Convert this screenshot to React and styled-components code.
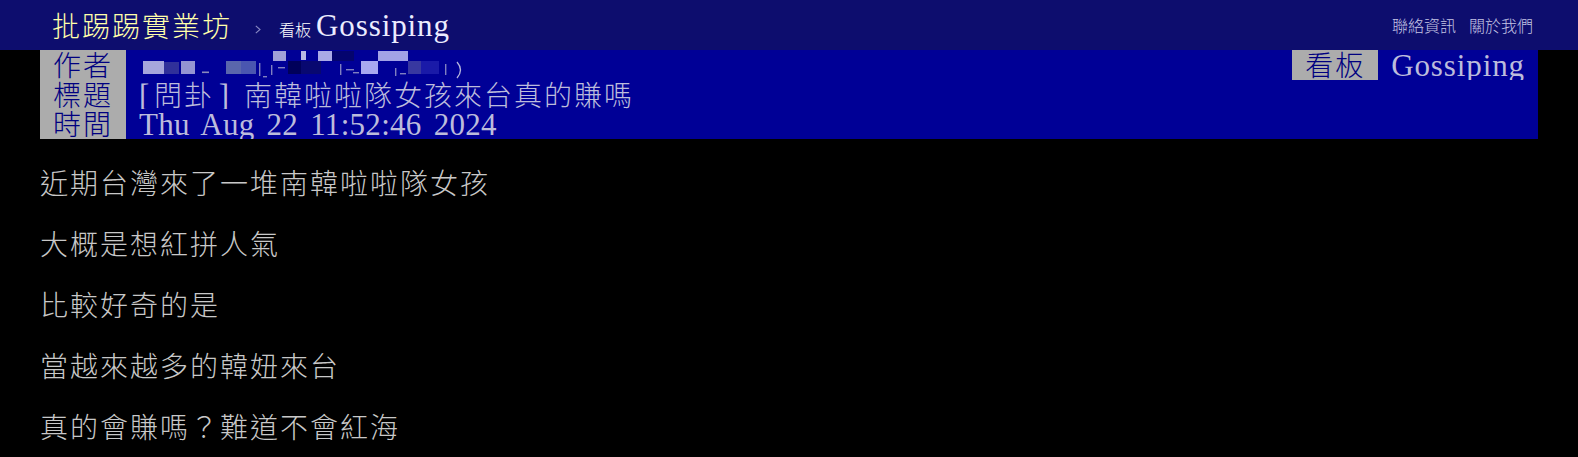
import React from "react";
import styled, { createGlobalStyle } from "styled-components";

const GlobalStyle = createGlobalStyle`
  html, body { margin: 0; padding: 0; background: #000; }
  body { font-family: "Noto Sans CJK TC", "Liberation Serif", sans-serif; font-weight: 300; }
  #root { min-height: 457px; }
`;

const Topbar = styled.div`
  display: flex;
  align-items: flex-start;
  height: 50px;
  background: #0d0d6e;
  padding: 0 45px 0 40px;
  overflow: hidden;
`;

const Logo = styled.a`
  padding: 0 10px 0 12px;
  font-size: 28px;
  letter-spacing: 2px;
  line-height: 50px;
  color: #ffffaa;
  text-decoration: none;
  white-space: nowrap;
`;

const Chevron = styled.svg`
  margin-left: 13px;
  margin-top: 25px;
  flex: none;
`;

const BoardLink = styled.a`
  display: block;
  margin-left: 18px;
  padding-top: 4px;
  font-size: 16px;
  line-height: 50px;
  height: 46px;
  color: #ffffff;
  text-decoration: none;
  white-space: nowrap;
`;

const Ascii = styled.span`
  font-family: "Liberation Serif", serif;
  font-weight: 400;
  font-size: 31px;
  line-height: 20px;
  letter-spacing: ${(p) => p.$ls || 0}px;
  word-spacing: ${(p) => p.$ws || 0}px;
  padding-left: ${(p) => p.$pl || 0}px;
  color: ${(p) => p.$color || "inherit"};
`;

const NavLinks = styled.div`
  margin-left: auto;
  display: flex;
  gap: 13px;
  line-height: 50px;
`;

const NavLink = styled.a`
  font-size: 16px;
  color: #c4c4e4;
  text-decoration: none;
  white-space: nowrap;
`;

const Meta = styled.div`
  margin: 0 40px;
  background: #000096;
`;

const MetaRow = styled.div`
  display: flex;
  height: 29.67px;
  line-height: 29.67px;
  overflow: hidden;
`;

const Tag = styled.span`
  flex: none;
  background: #acacac;
  color: #000080;
  padding: 0 13px;
  font-size: 28px;
  letter-spacing: 2px;
  white-space: nowrap;
`;

const Value = styled.span`
  display: block;
  flex: ${(p) => (p.$grow ? "1 1 auto" : "none")};
  padding: 0 13px;
  color: #bcbcdc;
  font-size: 28px;
  letter-spacing: 2px;
  white-space: nowrap;

  & > svg { vertical-align: top; }
`;

const Content = styled.div`
  padding: 28.5px 40px 0;
  color: #c8c8c8;
  font-size: 28px;
  letter-spacing: 2px;
  line-height: 30.5px;
`;

const Line = styled.div`
  white-space: nowrap;
  & + & { margin-top: 30.5px; }
`;

const blocks = [
  [142, 61, 21, 13, "#a6a6dc"],
  [163, 62, 15, 12, "#30309a"],
  [180, 61, 14, 13, "#9494d2"],
  [201, 71.5, 7, 1.6, "#8a8abc"],
  [225, 61, 15, 13, "#5a66ac"],
  [240, 61, 15, 13, "#4a56b0"],
  [272, 51, 13, 10, "#a0a0d8"],
  [300, 51, 5, 9, "#b8b8e4"],
  [287, 61, 13, 13, "#00005a"],
  [300, 61, 20, 13, "#080870"],
  [317, 51, 14, 10, "#aaaae6"],
  [331, 51, 22, 10, "#04046e"],
  [360, 61, 17, 13, "#a8a8f0"],
  [377, 51, 30, 10, "#a2a2e6"],
  [407, 61, 13, 13, "#3838a0"],
  [420, 61, 18, 13, "#1a1aa8"],
];

const faint = [
  [258, 63, 1.4, 13],
  [262, 76, 4, 1.4],
  [270, 65, 1.4, 10],
  [277, 67, 7, 1.4],
  [339, 64, 1.4, 11],
  [345, 69, 8, 1.4],
  [352, 72, 6, 1.4],
  [394, 68, 1.4, 8],
  [399, 73, 6, 1.4],
  [444, 64, 1.4, 11],
];

function Mosaic() {
  const ox = 138;
  const oy = 50;
  return (
    <svg width="340" height="30" viewBox="0 0 340 30" aria-hidden="true">
      {faint.map(([x, y, w, h], i) => (
        <rect key={"f" + i} x={x - ox} y={y - oy} width={w} height={h} fill="#8080c0" />
      ))}
      {blocks.map(([x, y, w, h, c], i) => (
        <rect key={i} x={x - ox} y={y - oy} width={w} height={h} fill={c} />
      ))}
      <path
        d={`M${456 - ox} ${62 - oy} Q${463 - ox} ${70 - oy} ${456 - ox} ${78 - oy}`}
        fill="none"
        stroke="#b4b4dc"
        strokeWidth="1.3"
      />
    </svg>
  );
}

const bodyLines = [
  "近期台灣來了一堆南韓啦啦隊女孩",
  "大概是想紅拼人氣",
  "比較好奇的是",
  "當越來越多的韓妞來台",
  "真的會賺嗎？難道不會紅海",
];

export default function App() {
  return (
    <>
      <GlobalStyle />
      <Topbar>
        <Logo href="#">批踢踢實業坊</Logo>
        <Chevron width="6" height="9" viewBox="0 0 6 9">
          <path d="M0.8 0.8 L5 4.5 L0.8 8.2" fill="none" stroke="#8a8ac4" strokeWidth="1.1" />
        </Chevron>
        <BoardLink href="#">
          看板
          <Ascii $pl={5} $ls={0.9} $color="#ececff">Gossiping</Ascii>
        </BoardLink>
        <NavLinks>
          <NavLink href="#">聯絡資訊</NavLink>
          <NavLink href="#">關於我們</NavLink>
        </NavLinks>
      </Topbar>
      <Meta>
        <MetaRow>
          <Tag>作者</Tag>
          <Value $grow>
            <Mosaic />
          </Value>
          <Tag>看板</Tag>
          <Value>
            <Ascii $ls={0.9}>Gossiping</Ascii>
          </Value>
        </MetaRow>
        <MetaRow>
          <Tag>標題</Tag>
          <Value $grow>
            <Ascii $ls={4.7}>[</Ascii>問卦<Ascii $pl={4.7}>]</Ascii>
            <Ascii $ls={7.25}> </Ascii>南韓啦啦隊女孩來台真的賺嗎
          </Value>
        </MetaRow>
        <MetaRow>
          <Tag>時間</Tag>
          <Value $grow>
            <Ascii $ls={0.3} $ws={4}>Thu Aug 22 11:52:46 2024</Ascii>
          </Value>
        </MetaRow>
      </Meta>
      <Content>
        {bodyLines.map((l) => (
          <Line key={l}>{l}</Line>
        ))}
      </Content>
    </>
  );
}
